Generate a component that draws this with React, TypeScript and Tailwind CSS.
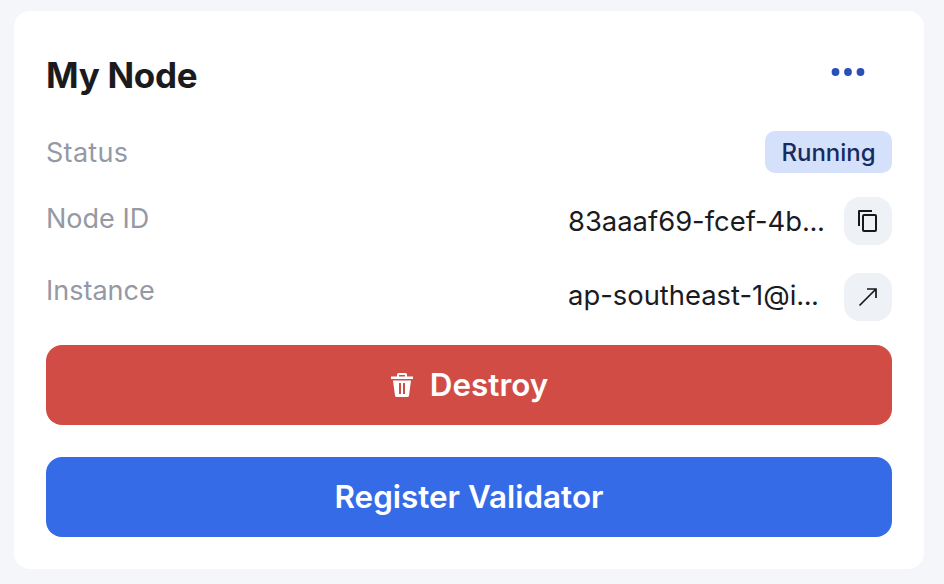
export default function App() {
  return (
    <main className="flex h-[584px] w-[944px] flex-col bg-[#f5f6fa] pt-[11px] pl-[14px] font-['Inter',sans-serif]">
      <section className="flex h-[558px] w-[910px] flex-col rounded-[16px] bg-white px-8 pt-[39px]">
        <header className="flex h-[50px] items-center justify-between">
          <h1 className="text-[35px] leading-[50px] font-bold tracking-[-0.3px] text-[#1b1b1d]">My Node</h1>
          <button aria-label="More" className="mr-[27px] -mt-[6px]">
            <svg width="34" height="10" viewBox="0 0 34 10" fill="#2850b8"><circle cx="4.5" cy="5" r="3.9" /><circle cx="17" cy="5" r="3.9" /><circle cx="29.5" cy="5" r="3.9" /></svg>
          </button>
        </header>
        <div className="mt-[31px] flex h-[42px] items-center justify-between">
          <span className="pt-[2px] text-[27px] leading-[42px] tracking-[0.3px] text-[#9499a5]">Status</span>
          <span className="flex h-[42px] w-[127px] items-center justify-center rounded-[10px] bg-[#d5e0fb] pt-[2px] text-[24px] font-medium text-[#172b5f]">Running</span>
        </div>
        <div className="mt-6 flex h-12 items-center justify-between">
          <span className="-mt-[5px] text-[27px] leading-[42px] text-[#9499a5]">Node ID</span>
          <div className="flex items-center">
            <span className="w-[276px] text-[27.4px] leading-[48px] whitespace-nowrap text-[#1b1b1f]">83aaaf69-fcef-4b<span className="tracking-[-0.5px]">...</span></span>
            <button aria-label="Copy" className="flex size-12 items-center justify-center rounded-2xl bg-[#eef1f6]">
              <svg width="24" height="24" viewBox="0 0 24 24" fill="none" stroke="#17181c" strokeWidth="2" strokeLinejoin="round"><path d="M3 17V2h13" /><rect x="7" y="6" width="13" height="16" rx="1" /></svg>
            </button>
          </div>
        </div>
        <div className="mt-7 flex h-12 items-center justify-between">
          <span className="-mt-[13px] text-[27px] leading-[42px] text-[#9499a5]">Instance</span>
          <div className="flex items-center">
            <span className="-mt-[4px] w-[276px] text-[27.4px] leading-[48px] whitespace-nowrap text-[#1b1b1f]">ap-southeast-1@i<span className="tracking-[-0.5px]">...</span></span>
            <button aria-label="Open" className="flex size-12 items-center justify-center rounded-2xl bg-[#eef1f6]">
              <svg width="24" height="24" viewBox="0 0 24 24" fill="none" stroke="#17181c" strokeWidth="1.7"><path d="M3.5 20.5 20 4M11 4h9v9" /></svg>
            </button>
          </div>
        </div>
        <button className="mt-6 flex h-20 items-center justify-center gap-[16px] rounded-2xl bg-[#d24c46] text-[31.4px] font-semibold text-white">
          <svg width="24" height="26" viewBox="0 0 24 26" fill="white"><path fillRule="evenodd" d="M1 4.5h6V2.5Q7 1 8.5 1h7Q17 1 17 2.5v2h6V7H1zM9 3v1.5h6V3zM3 8.5h18l-2 15Q18.8 25 17.5 25h-11Q5.2 25 5 23.5zM9 11v11h2V11zm4 0v11h2V11z" /></svg>
          <span className="pt-[2px]">Destroy</span>
        </button>
        <button className="mt-8 h-20 rounded-2xl bg-[#366be8] pt-[2px] text-[31.4px] font-semibold text-white">Register Validator</button>
      </section>
    </main>
  );
}
